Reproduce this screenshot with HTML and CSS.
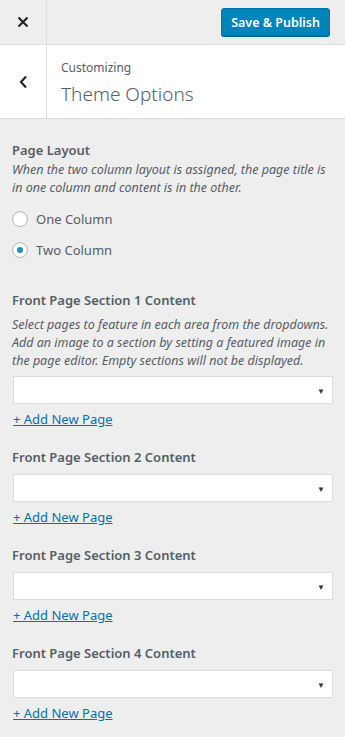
FILE: index.html
```html
<!DOCTYPE html>
<html lang="en">
<head>
  <meta charset="UTF-8" />
  <meta name="viewport" content="width=device-width, initial-scale=1.0"/>
  <title>Customizing Theme Options</title>
  <link rel="stylesheet" href="styles.css">
</head>
<body>
  <div class="header">
    <button class="close" aria-label="Close">
      <svg width="12" height="12" viewBox="0 0 12 12"><path d="M1.5 1.5l9 9M10.5 1.5l-9 9" stroke="#23282d" stroke-width="2.2"/></svg>
    </button>
    <button class="save">Save &amp; Publish</button>
  </div>

  <div class="info">
    <button class="back" aria-label="Back">
      <svg width="9" height="14" viewBox="0 0 9 14"><path d="M7 1.5L2 7l5 5.5" fill="none" stroke="#23282d" stroke-width="2.2"/></svg>
    </button>
    <div class="title">
      <span class="crumb">Customizing</span>
      <span class="name">Theme Options</span>
    </div>
  </div>

  <div class="panel">
    <div class="control radios">
      <span class="label">Page Layout</span>
      <span class="desc">When the two column layout is assigned, the page title is in one column and content is in the other.</span>
      <label class="radio"><span class="dot"></span>One Column</label>
      <label class="radio"><span class="dot checked"></span>Two Column</label>
    </div>

    <div class="control">
      <span class="label spaced">Front Page Section 1 Content</span>
      <span class="desc">Select pages to feature in each area from the dropdowns. Add an image to a section by setting a featured image in the page editor. Empty sections will not be displayed.</span>
      <div class="select"><span class="arrow">▼</span></div>
      <a class="add" href="#">+ Add New Page</a>
    </div>

    <div class="control">
      <span class="label">Front Page Section 2 Content</span>
      <div class="select"><span class="arrow">▼</span></div>
      <a class="add" href="#">+ Add New Page</a>
    </div>

    <div class="control">
      <span class="label">Front Page Section 3 Content</span>
      <div class="select"><span class="arrow">▼</span></div>
      <a class="add" href="#">+ Add New Page</a>
    </div>

    <div class="control">
      <span class="label">Front Page Section 4 Content</span>
      <div class="select"><span class="arrow">▼</span></div>
      <a class="add" href="#">+ Add New Page</a>
    </div>
  </div>
</body>
</html>
```

FILE: styles.css
```css
body {
  margin: 0;
  background-color: #eee;
  font-family: 'Noto Sans', 'Open Sans', sans-serif;
  color: #555d66;
  font-size: 13px;
}

button {
  border: none;
  background: none;
  padding: 0;
  cursor: pointer;
  font-family: inherit;
}

.header {
  display: flex;
  align-items: center;
  height: 44px;
  border-bottom: 1px solid #ddd;
}

.close {
  width: 47px;
  height: 44px;
  border-right: 1px solid #ddd;
  display: flex;
  align-items: center;
  justify-content: center;
}

.save {
  margin-left: auto;
  margin-right: 15px;
  height: 28px;
  padding: 0 9px;
  background-color: #0085ba;
  border: 1px solid #0073aa;
  border-radius: 3px;
  box-shadow: 0 1px 0 #006799;
  color: #fff;
  font-size: 12.5px;
  font-weight: 600;
}

.info {
  display: flex;
  background-color: #fff;
  height: 73px;
  border-bottom: 1px solid #ddd;
}

.back {
  width: 47px;
  border-right: 1px solid #ddd;
  display: flex;
  align-items: center;
  justify-content: center;
}

.title {
  display: flex;
  flex-direction: column;
  padding: 14px 0 0 14px;
  color: #555d66;
}

.crumb {
  font-size: 12px;
  line-height: 18px;
}

.name {
  font-size: 19px;
  font-weight: 300;
  line-height: 30px;
  margin-top: 2px;
}

.panel {
  padding: 20px 12px 12px;
}

.control {
  display: flex;
  flex-direction: column;
  margin-bottom: 18px;
}

.control.radios {
  margin-bottom: 24px;
}

.label {
  font-size: 13px;
  font-weight: 600;
  line-height: 22px;
}

.label.spaced {
  margin-bottom: 5px;
}

.desc {
  font-style: italic;
  font-size: 12.5px;
  line-height: 18px;
}

.radios .desc {
  margin-bottom: 6px;
}

.radio {
  display: flex;
  align-items: center;
  gap: 8px;
  height: 31px;
  font-size: 13px;
}

.dot {
  width: 14px;
  height: 14px;
  border: 1px solid #b4b9be;
  border-radius: 50%;
  background-color: #fff;
  box-shadow: inset 0 1px 2px rgba(0, 0, 0, 0.1);
  display: flex;
  align-items: center;
  justify-content: center;
}

.dot.checked::after {
  content: '';
  width: 6px;
  height: 6px;
  border-radius: 50%;
  background-color: #1e8cbe;
}

.select {
  height: 26px;
  margin: 6px 0 0 1px;
  border: 1px solid #ddd;
  background-color: #fff;
  display: flex;
  align-items: center;
  justify-content: flex-end;
}

.arrow {
  font-size: 8px;
  color: #32373c;
  margin-right: 7px;
}

.add {
  margin-top: 6px;
  margin-left: 1px;
  color: #0073aa;
  font-size: 13px;
  line-height: 18px;
  width: max-content;
}
```
